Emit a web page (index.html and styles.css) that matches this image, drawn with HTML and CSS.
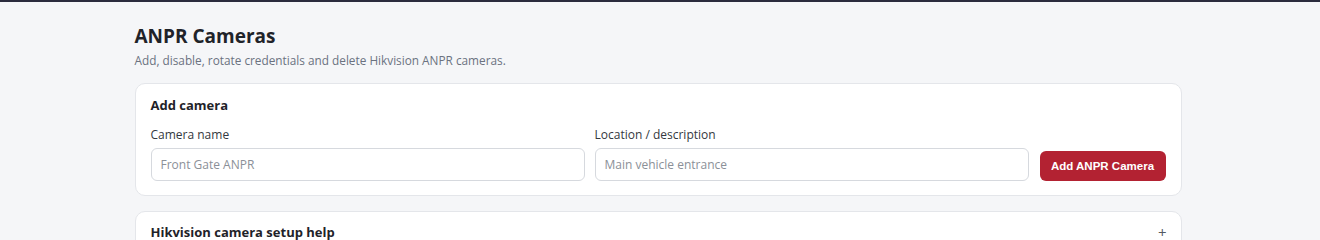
FILE: index.html
```html
<!DOCTYPE html>
<html lang="en">
<head>
  <meta charset="UTF-8">
  <meta name="viewport" content="width=device-width, initial-scale=1.0">
  <title>ANPR Cameras</title>
  <link rel="stylesheet" href="styles.css">
</head>
<body>
  <main class="page">
    <header class="page-head">
      <h1>ANPR Cameras</h1>
      <p>Add, disable, rotate credentials and delete Hikvision ANPR cameras.</p>
    </header>

    <section class="card">
      <h3>Add camera</h3>
      <form class="add-form">
        <label class="field">
          <span>Camera name</span>
          <input type="text" placeholder="Front Gate ANPR">
        </label>
        <label class="field">
          <span>Location / description</span>
          <input type="text" placeholder="Main vehicle entrance">
        </label>
        <button type="button" class="btn-primary">Add ANPR Camera</button>
      </form>
    </section>

    <section class="card help">
      <div class="help-head">
        <h3>Hikvision camera setup help</h3>
        <span class="toggle">+</span>
      </div>
    </section>
  </main>
</body>
</html>
```

FILE: styles.css
```css
:root {
  --background-color: #f5f6f8;
  --card-bg: #ffffff;
  --text-color: #1f2329;
  --muted: #6b7280;
  --border-color: #e4e6ea;
  --input-border: #d6d9de;
  --primary: #b32232;
}

body {
  margin: 0;
  border-top: 2px solid #2b2c3d;
  background: var(--background-color);
  color: var(--text-color);
  font-family: "Open Sans", "Noto Sans", sans-serif;
}

.page {
  max-width: 1047px;
  margin: 0 auto;
  padding: 22px 4px 0 0;
}

.page-head h1 {
  margin: 0;
  font-size: 19px;
  line-height: 24px;
  font-weight: 700;
}

.page-head p {
  margin: 4px 0 15px;
  font-size: 11.8px;
  line-height: 16px;
  color: var(--muted);
}

.card {
  background: var(--card-bg);
  border: 1px solid var(--border-color);
  border-radius: 10px;
  padding: 13px 15px 14px;
  margin-bottom: 15px;
}

.card h3 {
  margin: 0;
  font-size: 13px;
  line-height: 16px;
  font-weight: 700;
}

.add-form {
  display: flex;
  align-items: flex-end;
  gap: 10px;
  margin-top: 14px;
}

.field {
  flex: 1;
  display: flex;
  flex-direction: column;
  gap: 5px;
  font-size: 12px;
  line-height: 16px;
  color: #333840;
}

.field input {
  height: 33px;
  box-sizing: border-box;
  padding: 0 9px;
  border: 1px solid var(--input-border);
  border-radius: 6px;
  font-family: inherit;
  font-size: 12px;
  color: var(--text-color);
  background: #fff;
}

.field input::placeholder {
  color: #8b9098;
}

.btn-primary {
  width: 126px;
  height: 30px;
  margin-left: 1px;
  border: none;
  border-radius: 6px;
  background: var(--primary);
  color: #fff;
  font-family: "Liberation Sans", Arial, sans-serif;
  font-size: 11.5px;
  font-weight: 700;
  cursor: pointer;
}

.help {
  padding-top: 12px;
}

.help-head {
  display: flex;
  justify-content: space-between;
  align-items: center;
}

.toggle {
  font-size: 15px;
  line-height: 14px;
  color: #555a62;
  margin-right: -1px;
}
```
